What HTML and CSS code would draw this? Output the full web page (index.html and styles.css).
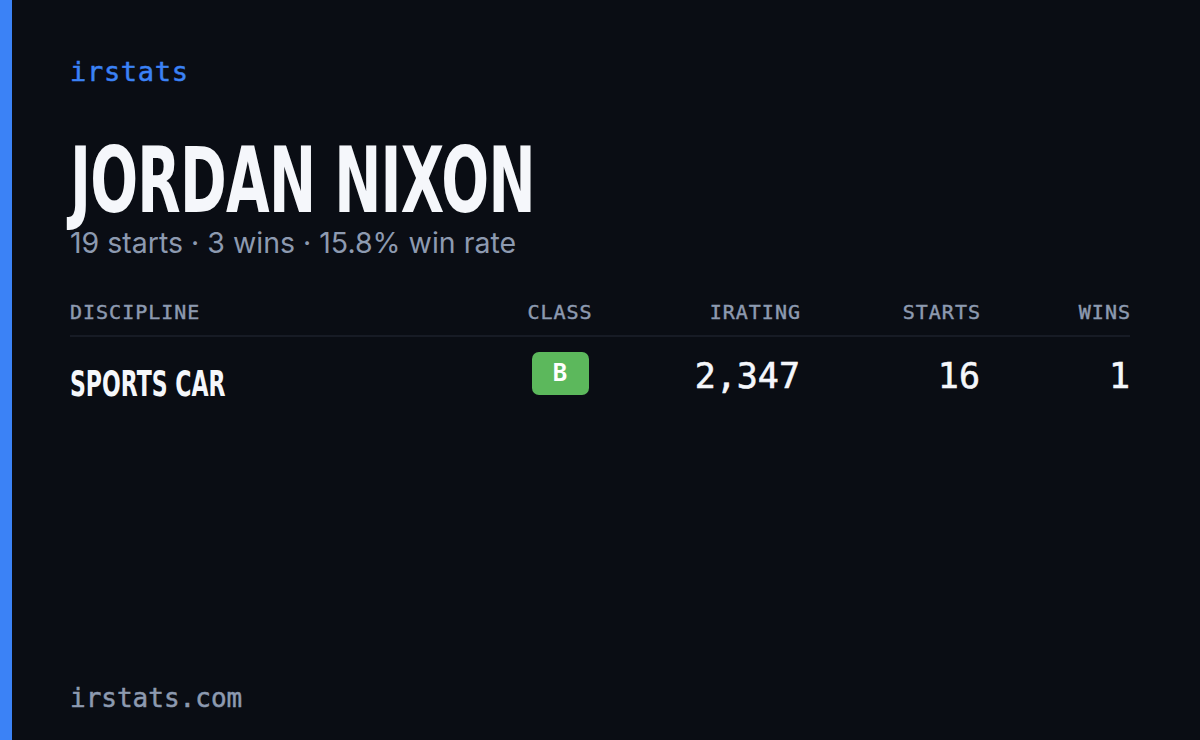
FILE: index.html
```html
<!DOCTYPE html>
<html>
<head>
<meta charset="utf-8">
<link rel="stylesheet" href="styles.css">
</head>
<body>
<div class="card">
  <div class="accent"></div>
  <main class="content">
    <div class="brand">irstats</div>
    <h1 class="name"><span class="squeeze">JORDAN NIXON</span></h1>
    <p class="summary">19 starts · 3 wins · 15.8% win rate</p>
    <div class="table">
      <div class="row head">
        <div class="cell left">DISCIPLINE</div>
        <div class="cell center">CLASS</div>
        <div class="cell right">IRATING</div>
        <div class="cell right">STARTS</div>
        <div class="cell right">WINS</div>
      </div>
      <div class="row body">
        <div class="cell left disc"><span class="squeeze-s">SPORTS CAR</span></div>
        <div class="cell center"><span class="badge">B</span></div>
        <div class="cell right num">2,347</div>
        <div class="cell right num">16</div>
        <div class="cell right num">1</div>
      </div>
    </div>
    <div class="spacer"></div>
    <div class="footer">irstats.com</div>
  </main>
</div>
</body>
</html>
```

FILE: styles.css
```css
html, body {
  margin: 0;
  padding: 0;
  background: #0a0d14;
}
.card {
  width: 1200px;
  height: 740px;
  display: flex;
  background: #0a0d14;
  overflow: hidden;
}
.accent {
  width: 12px;
  background: #3b82f6;
  flex: none;
}
.content {
  flex: 1;
  display: flex;
  flex-direction: column;
  padding: 55px 70px 25px 58px;
}
.brand {
  font-family: "DejaVu Sans Mono", monospace;
  font-size: 27px;
  line-height: 34px;
  color: #3b82f6;
  letter-spacing: 0.7px;
  -webkit-text-stroke: 0.5px #3b82f6;
}
.name {
  margin: 50px 0 0 0;
  font-family: "DejaVu Sans", sans-serif;
  font-stretch: condensed;
  font-weight: bold;
  font-size: 90px;
  line-height: 84px;
  color: #f5f7fb;
  letter-spacing: -1px;
}
.squeeze {
  display: inline-block;
  transform: scaleX(0.695);
  transform-origin: left center;
}
.summary {
  margin: 2px 0 0 0;
  font-family: "Inter", "Noto Sans", sans-serif;
  font-size: 28.5px;
  line-height: 36px;
  color: #8d9ab0;
}
.table {
  margin-top: 28px;
}
.row {
  display: grid;
  grid-template-columns: 1fr 120px 180px 180px 150px;
  align-items: center;
}
.row.head {
  height: 46px;
  border-bottom: 2px solid #171b25;
  font-family: "DejaVu Sans Mono", monospace;
  font-size: 20px;
  color: #8d9ab0;
  letter-spacing: 1px;
  -webkit-text-stroke: 0.45px #8d9ab0;
}
.row.head .cell.right {
  margin-right: -1px;
}
.row.body {
  height: 82px;
}
.cell.left { text-align: left; }
.cell.center { text-align: center; }
.cell.right { text-align: right; }
.disc {
  font-family: "DejaVu Sans", sans-serif;
  font-stretch: condensed;
  font-weight: bold;
  font-size: 35px;
  color: #f5f7fb;
  padding-top: 12px;
}
.squeeze-s {
  display: inline-block;
  transform: scaleX(0.7);
  transform-origin: left center;
}
.badge {
  display: inline-block;
  width: 57px;
  height: 43px;
  line-height: 43px;
  border-radius: 7px;
  background: #5cb85c;
  color: #ffffff;
  font-family: "DejaVu Sans Mono", monospace;
  font-weight: bold;
  font-size: 24px;
  margin-top: -10px;
}
.num {
  font-family: "DejaVu Sans Mono", monospace;
  font-size: 35px;
  color: #f5f7fb;
  margin-top: -5px;
  -webkit-text-stroke: 0.6px #f5f7fb;
}
.spacer {
  flex: 1;
}
.footer {
  font-family: "DejaVu Sans Mono", monospace;
  font-size: 26px;
  line-height: 34px;
  color: #8d9ab0;
  -webkit-text-stroke: 0.5px #8d9ab0;
}
```
